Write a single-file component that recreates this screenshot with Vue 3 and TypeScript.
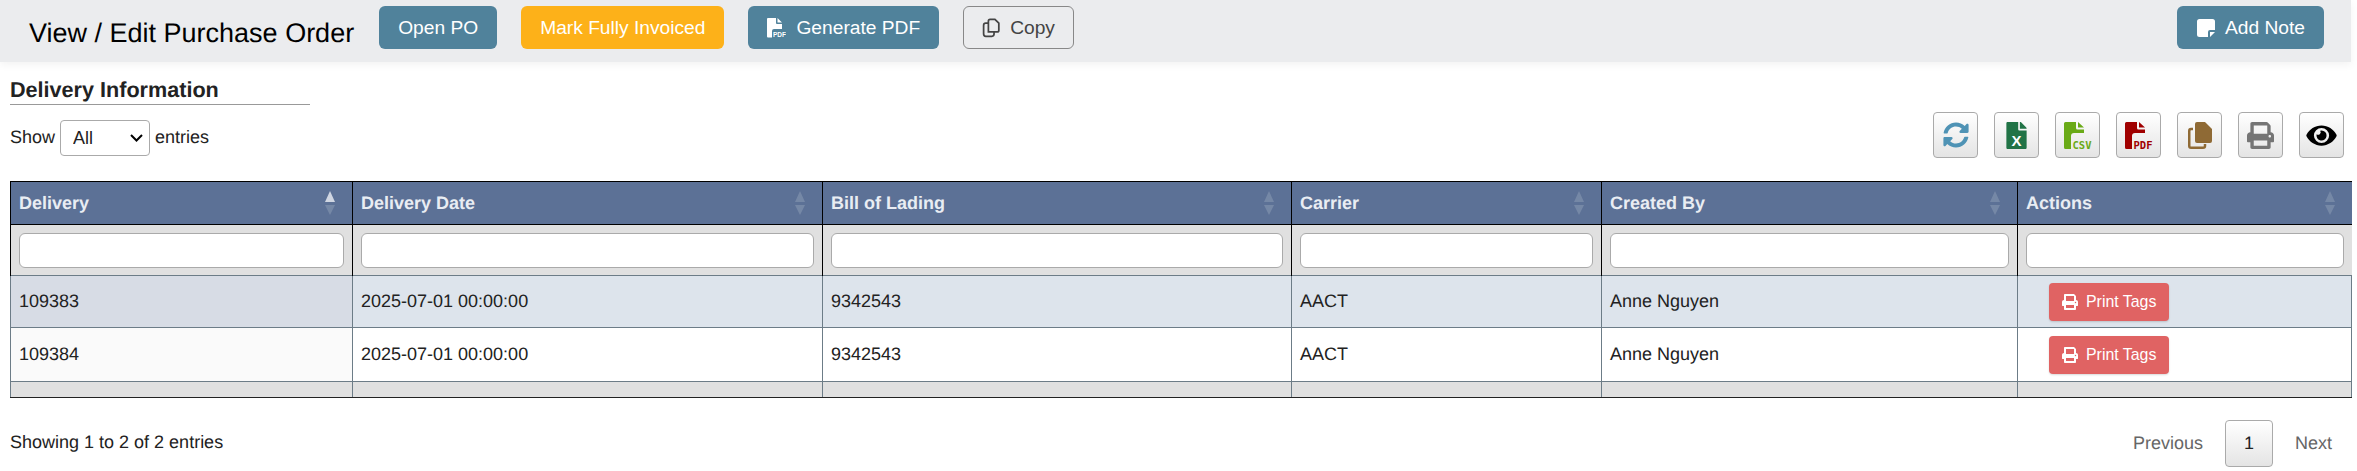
<template>
  <div class="page">
    <header class="topBar">
      <h1 class="title">View / Edit Purchase Order</h1>
      <button class="btn teal">Open PO</button>
      <button class="btn amber">Mark Fully Invoiced</button>
      <button class="btn teal">
        <svg class="btnIcon" viewBox="0 0 19 20" width="19" height="20">
          <path fill="currentColor" d="M1 0H9V5Q9 6 10 6H15V11H7Q5 11 5 13V19.500H1Q0 19.500 0 18.500V1Q0 0 1 0ZM10.500 0 15 4.500H10.500Z" />
          <text x="6" y="19" class="pdfLabel">PDF</text>
        </svg>
        Generate PDF
      </button>
      <button class="btn outline">
        <svg class="btnIcon" viewBox="2 1 20 23" width="18" height="20" fill="none" stroke="currentColor" stroke-width="2">
          <path d="M9 17V4.500Q9 2.500 11 2.500H16.500L21 7V15Q21 17 19 17Z" />
          <path d="M9 7H6Q3.500 7 3.500 9.500V19Q3.500 22 6 22H13Q15.500 22 15.500 19.500V17" />
        </svg>
        Copy
      </button>
      <button class="btn teal addNote">
        <svg class="btnIcon" viewBox="0 0 18 18" width="18" height="18">
          <path fill="currentColor" d="M2.500 0H15.500Q18 0 18 2.500V11H13Q11 11 11 13V18H2.500Q0 18 0 15.500V2.500Q0 0 2.500 0ZM13 13H18L13 18Z" />
        </svg>
        Add Note
      </button>
    </header>

    <section class="content">
      <h2 class="sectionTitle">Delivery Information</h2>

      <div class="toolbar">
        <label class="lengthControl">
          Show
          <select class="lengthSelect">
            <option>All</option>
            <option>10</option>
            <option>25</option>
          </select>
          entries
        </label>
        <div class="tools">
          <button class="toolBtn" title="Refresh">
            <svg viewBox="0 0 512 512" width="26" height="26">
              <path fill="#4f93b5" d="M370.72 133.28C339.458 104.008 298.888 87.962 255.848 88c-77.458.068-144.328 53.178-162.791 126.85-1.344 5.363-6.122 9.15-11.651 9.15H24.103c-7.498 0-13.194-6.807-11.807-14.176C33.933 94.924 134.813 8 256 8c66.448 0 126.791 26.136 171.315 68.685L463.03 40.97C478.149 25.851 504 36.559 504 57.941V192c0 13.255-10.745 24-24 24H345.941c-21.382 0-32.09-25.851-16.971-40.971l41.75-41.749zM32 296h134.059c21.382 0 32.09 25.851 16.971 40.971l-41.75 41.75c31.262 29.273 71.835 45.319 114.876 45.28 77.418-.07 144.315-53.144 162.787-126.849 1.344-5.363 6.122-9.15 11.651-9.15h57.304c7.498 0 13.194 6.807 11.807 14.176C478.067 417.076 377.187 504 256 504c-66.448 0-126.791-26.136-171.315-68.685L48.97 471.03C33.851 486.149 8 475.441 8 454.059V320c0-13.255 10.745-24 24-24z" />
            </svg>
          </button>
          <button class="toolBtn" title="Excel">
            <svg viewBox="0 0 384 512" width="21" height="27">
              <path fill="#217346" d="M224 136V0H24C10.700 0 0 10.700 0 24v464c0 13.300 10.700 24 24 24h336c13.300 0 24-10.700 24-24V160H248c-13.200 0-24-10.800-24-24zm160-14.100v6.100H256V0h6.100c6.400 0 12.500 2.500 17 7l97.900 98c4.500 4.500 7 10.600 7 16.900z" />
              <text x="192" y="455" class="excelLabel">X</text>
            </svg>
          </button>
          <button class="toolBtn" title="CSV">
            <svg viewBox="0 0 28 27" width="28" height="27">
              <path fill="#6aaa17" d="M1.500 0H12V6Q12 7.500 13.500 7.500H20V11H10Q7 11 7 14V27H1.500Q0 27 0 25.500V1.500Q0 0 1.500 0ZM14 0 20 5.500H14Z" />
              <text x="8.500" y="26.500" class="fileLabel" fill="#6aaa17">CSV</text>
            </svg>
          </button>
          <button class="toolBtn" title="PDF">
            <svg viewBox="0 0 28 27" width="28" height="27">
              <path fill="#a00000" d="M1.500 0H12V6Q12 7.500 13.500 7.500H20V11H10Q7 11 7 14V27H1.500Q0 27 0 25.500V1.500Q0 0 1.500 0ZM14 0 20 5.500H14Z" />
              <text x="8.500" y="26.500" class="fileLabel" fill="#a00000">PDF</text>
            </svg>
          </button>
          <button class="toolBtn" title="Copy">
            <svg viewBox="0 0 24 27" width="24" height="27">
              <path fill="#8f6a35" d="M9 0H17L24 7V19Q24 21 22 21H9Q7 21 7 19V2Q7 0 9 0Z" />
              <path fill="none" stroke="#8f6a35" stroke-width="2.500" d="M5 7H3Q1.250 7 1.250 9V24Q1.250 25.750 3 25.750H15Q17 25.750 17 24V22" />
            </svg>
          </button>
          <button class="toolBtn" title="Print">
            <svg viewBox="0 0 512 512" width="27" height="27">
              <path fill="#757575" d="M448 192V77.250c0-8.490-3.370-16.620-9.370-22.630L393.370 9.370c-6-6-14.140-9.370-22.630-9.370H96C78.330 0 64 14.330 64 32v160c-35.350 0-64 28.650-64 64v112c0 8.840 7.160 16 16 16h48v96c0 17.670 14.330 32 32 32h320c17.670 0 32-14.330 32-32v-96h48c8.840 0 16-7.160 16-16V256c0-35.350-28.650-64-64-64zm-64 256H128v-96h256v96zm0-224H128V64h256v160zm48 72c-13.250 0-24-10.750-24-24 0-13.260 10.750-24 24-24s24 10.740 24 24c0 13.250-10.750 24-24 24z" />
            </svg>
          </button>
          <button class="toolBtn" title="Columns">
            <svg viewBox="0 0 576 512" width="31" height="27">
              <path fill="#000" d="M572.520 241.400C518.290 135.590 410.930 64 288 64S57.680 135.640 3.480 241.410a32.350 32.350 0 0 0 0 29.190C57.710 376.410 165.070 448 288 448s230.320-71.640 284.520-177.410a32.350 32.350 0 0 0 0-29.190zM288 400a144 144 0 1 1 144-144 143.930 143.930 0 0 1-144 144zm0-240a95.310 95.310 0 0 0-25.310 3.790 47.850 47.850 0 0 1-66.900 66.900A95.780 95.780 0 1 0 288 160z" />
            </svg>
          </button>
        </div>
      </div>

      <table class="grid">
        <colgroup>
          <col v-for="col in columns" :key="col.label" :style="{ width: col.width + 'px' }" />
        </colgroup>
        <thead>
          <tr class="headRow">
            <th v-for="(col, i) in columns" :key="col.label">
              {{ col.label }}
              <span class="sort up" :class="{ active: i === 0 }"></span>
              <span class="sort down"></span>
            </th>
          </tr>
          <tr class="filterRow">
            <td v-for="col in columns" :key="col.label"><input class="filter" type="text" /></td>
          </tr>
        </thead>
        <tbody>
          <tr v-for="(row, i) in rows" :key="row.delivery" :class="i === 0 ? 'rowOne' : 'rowTwo'">
            <td class="sorted">{{ row.delivery }}</td>
            <td>{{ row.date }}</td>
            <td>{{ row.bol }}</td>
            <td>{{ row.carrier }}</td>
            <td>{{ row.createdBy }}</td>
            <td>
              <button class="printBtn">
                <svg viewBox="0 0 512 512" width="16" height="16">
                  <path fill="currentColor" d="M448 192V77.250c0-8.490-3.370-16.620-9.370-22.630L393.370 9.370c-6-6-14.140-9.370-22.630-9.370H96C78.330 0 64 14.330 64 32v160c-35.350 0-64 28.650-64 64v112c0 8.840 7.160 16 16 16h48v96c0 17.670 14.330 32 32 32h320c17.670 0 32-14.330 32-32v-96h48c8.840 0 16-7.160 16-16V256c0-35.350-28.650-64-64-64zm-64 256H128v-96h256v96zm0-224H128V64h256v160zm48 72c-13.250 0-24-10.750-24-24 0-13.260 10.750-24 24-24s24 10.740 24 24c0 13.250-10.750 24-24 24z" />
                </svg>
                Print Tags
              </button>
            </td>
          </tr>
        </tbody>
        <tfoot>
          <tr class="footRow">
            <td v-for="col in columns" :key="col.label"></td>
          </tr>
        </tfoot>
      </table>

      <div class="tableFooter">
        <span class="info">Showing 1 to 2 of 2 entries</span>
        <nav class="pager">
          <a class="pageLink">Previous</a>
          <a class="pageNum">1</a>
          <a class="pageLink">Next</a>
        </nav>
      </div>
    </section>
  </div>
</template>

<script setup lang="ts">
interface Column {
  label: string
  width: number
}

interface Delivery {
  delivery: string
  date: string
  bol: string
  carrier: string
  createdBy: string
}

const columns: Column[] = [
  { label: 'Delivery', width: 342 },
  { label: 'Delivery Date', width: 470 },
  { label: 'Bill of Lading', width: 469 },
  { label: 'Carrier', width: 310 },
  { label: 'Created By', width: 416 },
  { label: 'Actions', width: 334 },
]

const rows: Delivery[] = [
  { delivery: '109383', date: '2025-07-01 00:00:00', bol: '9342543', carrier: 'AACT', createdBy: 'Anne Nguyen' },
  { delivery: '109384', date: '2025-07-01 00:00:00', bol: '9342543', carrier: 'AACT', createdBy: 'Anne Nguyen' },
]
</script>

<style>
html,
body {
  margin: 0;
  background: #fff;
  overflow: hidden;
}
</style>

<style scoped>
.page {
  width: 2351px;
  font-family: "Liberation Sans", Arial, sans-serif;
  font-size: 18px;
  color: #222;
  text-rendering: geometricPrecision;
}

.topBar {
  display: flex;
  align-items: flex-start;
  gap: 24px;
  height: 62px;
  box-sizing: border-box;
  padding: 6px 27px 0 29px;
  background: #ebecee;
  box-shadow: 0 3px 8px rgba(0, 0, 0, 0.05);
}

.title {
  margin: 11px 1px 0 0;
  font-size: 27px;
  font-weight: 400;
  line-height: 32px;
  color: #000;
}

.btn {
  display: inline-flex;
  align-items: center;
  gap: 10px;
  height: 43px;
  padding: 0 19px;
  border: none;
  border-radius: 6px;
  font-family: inherit;
  font-size: 19.2px;
  color: #fff;
  white-space: nowrap;
}

.teal {
  background: #50829b;
}

.amber {
  background: #fdb119;
}

.outline {
  padding: 0 18px;
  background: transparent;
  border: 1px solid #888;
  color: #444;
}

.addNote {
  margin-left: auto;
  padding-left: 20px;
}

.pdfLabel {
  font-size: 6.500px;
  font-weight: 700;
  fill: currentColor;
}

.content {
  padding: 0 0 0 10px;
}

.sectionTitle {
  width: 300px;
  margin: 16px 0 0;
  padding-bottom: 2px;
  border-bottom: 1px solid #999;
  font-size: 21.600px;
  font-weight: 700;
  line-height: 24px;
  color: #222;
}

.toolbar {
  display: flex;
  justify-content: space-between;
  align-items: center;
  height: 46px;
  margin-top: 7px;
  padding-right: 7px;
}

.lengthControl {
  display: flex;
  align-items: center;
  gap: 5px;
  margin-top: 5px;
}

.lengthSelect {
  appearance: none;
  width: 90px;
  height: 36px;
  padding: 0 12px;
  border: 1px solid #aaa;
  border-radius: 4px;
  background: #fff url("data:image/svg+xml,%3Csvg xmlns='http://www.w3.org/2000/svg' width='13' height='8' viewBox='0 0 13 8'%3E%3Cpath d='M1 1l5.500 5.500L12 1' fill='none' stroke='%23000' stroke-width='2'/%3E%3C/svg%3E") no-repeat right 6px center;
  font-family: inherit;
  font-size: 18px;
  color: #222;
}

.tools {
  display: flex;
  gap: 16px;
}

.toolBtn {
  display: flex;
  align-items: center;
  justify-content: center;
  width: 45px;
  height: 46px;
  padding: 0;
  border: 1px solid #aaa;
  border-radius: 4px;
  background: linear-gradient(to bottom, #fff, #e4e4e4);
}

.excelLabel {
  font-size: 285px;
  font-weight: 700;
  fill: #fff;
  text-anchor: middle;
}

.fileLabel {
  font-family: "DejaVu Sans Mono", monospace;
  font-size: 10.500px;
  font-weight: 700;
}

.grid {
  width: 2341px;
  margin-top: 23px;
  table-layout: fixed;
  border-collapse: collapse;
}

.grid th,
.grid td {
  box-sizing: border-box;
  padding: 0 8px;
  overflow: hidden;
  white-space: nowrap;
  text-align: left;
}

.headRow {
  height: 43px;
  background: #5c7196;
}

.headRow th {
  position: relative;
  border: 1px solid #000;
  font-size: 18px;
  font-weight: 700;
  color: #e9edf3;
}

.headRow th:last-child {
  border-right: none;
}

.sort {
  position: absolute;
  right: 17px;
  width: 0;
  height: 0;
  border-left: 5px solid transparent;
  border-right: 5px solid transparent;
  opacity: 0.55;
}

.sort.up {
  top: 9px;
  border-bottom: 11px solid #8a9ab5;
}

.sort.down {
  top: 23px;
  border-top: 10px solid #8a9ab5;
}

.sort.up.active {
  border-bottom-color: #d0d6e2;
  opacity: 1;
}

.filterRow {
  height: 51px;
  background: #e0e0e0;
}

.filterRow td {
  border-left: 1px solid #000;
  border-right: 1px solid #000;
}

.filterRow td:last-child {
  border-right: none;
}

.filter {
  display: block;
  box-sizing: border-box;
  width: 100%;
  height: 35px;
  border: 1px solid #aaa;
  border-radius: 6px;
  background: #fff;
}

.rowOne {
  height: 52px;
  background: #dde4ec;
}

.rowTwo {
  height: 54px;
  background: #fff;
}

.rowOne td,
.rowTwo td {
  border: 1px solid #6c7c87;
}

.rowOne .sorted {
  background: #d7dce5;
}

.rowTwo .sorted {
  background: #fafafa;
}

.printBtn {
  display: inline-flex;
  align-items: center;
  gap: 8px;
  height: 38px;
  margin-left: 23px;
  padding: 0 13px;
  border: none;
  border-radius: 4px;
  background: #e06363;
  box-shadow: 0 1px 2px rgba(0, 0, 0, 0.15);
  font-family: inherit;
  font-size: 15.900px;
  color: #fff;
}

.footRow {
  height: 16px;
  background: #e0e0e0;
}

.footRow td {
  border-left: 1px solid #6c7c87;
  border-right: 1px solid #6c7c87;
  border-top: 1px solid #8a959c;
  border-bottom: 1px solid #222;
}

.tableFooter {
  display: flex;
  justify-content: space-between;
  align-items: center;
  height: 47px;
  margin-top: 22px;
  padding-right: 19px;
}

.info {
  padding-bottom: 3px;
}

.pager {
  display: flex;
  align-items: center;
  gap: 22px;
}

.pageLink {
  color: #666;
}

.pageNum {
  display: flex;
  align-items: center;
  justify-content: center;
  width: 48px;
  height: 47px;
  box-sizing: border-box;
  border: 1px solid #aaa;
  border-radius: 4px;
  background: linear-gradient(to bottom, #fff, #e4e4e4);
  color: #222;
}
</style>
